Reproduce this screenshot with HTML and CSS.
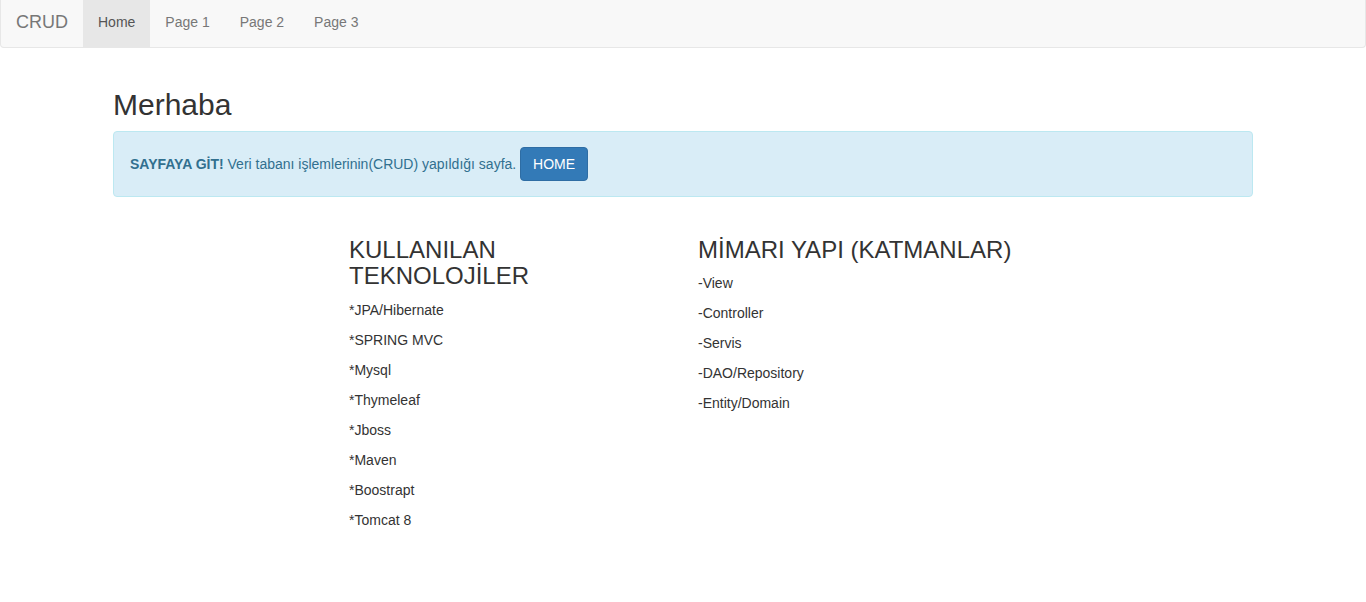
FILE: index.html
```html
<!DOCTYPE html>
<html lang="tr">
<head>
<meta charset="utf-8">
<title>CRUD</title>
<link rel="stylesheet" href="styles.css">
</head>
<body>
<nav class="navbar">
  <a class="brand" href="#">CRUD</a>
  <ul class="nav">
    <li class="active"><a href="#">Home</a></li>
    <li><a href="#">Page 1</a></li>
    <li><a href="#">Page 2</a></li>
    <li><a href="#">Page 3</a></li>
  </ul>
</nav>
<main class="container">
  <h2 class="title">Merhaba</h2>
  <div class="alert">
    <strong>SAYFAYA GİT!</strong> Veri tabanı işlemlerinin(CRUD) yapıldığı sayfa.
    <a class="btn" href="#">HOME</a>
  </div>
  <div class="row">
    <div class="col">
      <h3>KULLANILAN TEKNOLOJİLER</h3>
      <p>*JPA/Hibernate</p>
      <p>*SPRING MVC</p>
      <p>*Mysql</p>
      <p>*Thymeleaf</p>
      <p>*Jboss</p>
      <p>*Maven</p>
      <p>*Boostrapt</p>
      <p>*Tomcat 8</p>
    </div>
    <div class="col">
      <h3>MİMARI YAPI (KATMANLAR)</h3>
      <p>-View</p>
      <p>-Controller</p>
      <p>-Servis</p>
      <p>-DAO/Repository</p>
      <p>-Entity/Domain</p>
    </div>
  </div>
</main>
</body>
</html>
```

FILE: styles.css
```css
* { box-sizing: border-box; }
html, body {
  margin: 0;
  padding: 0;
  background: #fff;
}
body {
  font-family: "Liberation Sans", Arial, sans-serif;
  font-size: 14px;
  line-height: 20px;
  color: #333;
}
a { text-decoration: none; }

.navbar {
  display: flex;
  align-items: stretch;
  height: 48px;
  background: #f8f8f8;
  border: 1px solid #e7e7e7;
  border-top: 0;
  border-radius: 0 0 4px 4px;
  margin-bottom: 40px;
}
.brand {
  font-size: 18px;
  line-height: 20px;
  color: #777;
  padding: 12px 15px 14px 15px;
}
.nav {
  display: flex;
  list-style: none;
  margin: 0;
  padding: 0;
}
.nav li a {
  display: block;
  color: #777;
  padding: 12px 15px 15px;
  line-height: 20px;
  height: 47px;
}
.nav li.active a {
  background: #e7e7e7;
  color: #555;
}

.container {
  width: 1170px;
  margin: 0 auto;
  padding: 0 15px;
}
.title {
  font-size: 30px;
  font-weight: 500;
  line-height: 33px;
  margin: 20px 0 10px;
}
.alert {
  background: #d9edf7;
  border: 1px solid #bce8f1;
  color: #31708f;
  border-radius: 4px;
  padding: 15px 16px;
  margin-bottom: 20px;
}
.alert strong { font-weight: 700; }
.btn {
  display: inline-block;
  color: #fff;
  background: #337ab7;
  border: 1px solid #2e6da4;
  border-radius: 4px;
  padding: 6px 12px;
  font-size: 14px;
  line-height: 20px;
}

.row {
  display: flex;
  justify-content: center;
}
.col {
  width: 349px;
  padding: 0 15px;
}
.col h3 {
  font-size: 24px;
  font-weight: 500;
  line-height: 26.4px;
  margin: 20px 0 10px;
}
.col p {
  margin: 0 0 10px;
}
```
